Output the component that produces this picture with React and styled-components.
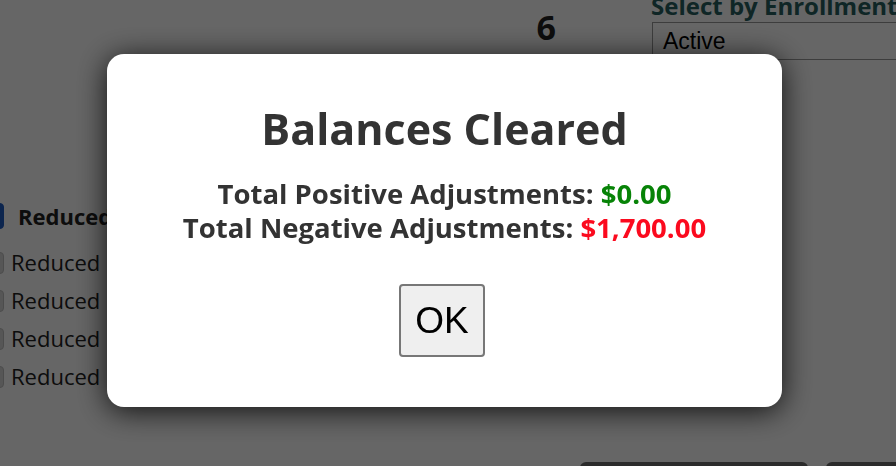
import React from 'react';
import styled, { createGlobalStyle } from 'styled-components';

const Global = createGlobalStyle`
  html, body { margin: 0; padding: 0; }
  body {
    width: 896px;
    height: 466px;
    overflow: hidden;
    background: #fff;
    font-family: "Open Sans", "Noto Sans", sans-serif;
  }
`;

const Page = styled.div`
  width: 896px;
  height: 466px;
  overflow: hidden;
  display: grid;
  grid-template-columns: minmax(0, 1fr);
  grid-template-rows: 62px minmax(0, 1fr) 4px;
`;

const Header = styled.div`
  display: flex;
  justify-content: flex-end;
  align-items: flex-start;
  min-width: 0;
`;

const Count = styled.div`
  font-family: "Open Sans", sans-serif;
  font-weight: 700;
  font-size: 34px;
  line-height: 1;
  color: #222;
  margin: 10px 95px 0 0;
`;

const Filter = styled.div`
  width: 245px;
  flex-shrink: 0;
  display: flex;
  flex-direction: column;
  overflow: hidden;
`;

const FilterLabel = styled.div`
  font-family: "Open Sans", sans-serif;
  font-weight: 700;
  font-size: 24px;
  line-height: 22px;
  color: #266060;
  margin-top: -5px;
  white-space: nowrap;
`;

const Select = styled.div`
  margin: 5px 0 0 1px;
  height: 38px;
  width: 260px;
  box-sizing: border-box;
  border: 1px solid #9a9a9a;
  display: flex;
  align-items: center;
  padding-left: 10px;
  font-family: "Liberation Sans", Arial, sans-serif;
  font-size: 23px;
  color: #000;
`;

const List = styled.div`
  display: flex;
  flex-direction: column;
  padding-top: 141px;
  gap: 15px;
  overflow: hidden;
`;

const Item = styled.label`
  display: flex;
  align-items: center;
  gap: ${(p) => (p.$head ? '14px' : '7px')};
  font-family: "Open Sans", sans-serif;
  font-weight: ${(p) => (p.$head ? 700 : 400)};
  font-size: 22px;
  line-height: 23px;
  color: #222;
  margin-bottom: ${(p) => (p.$head ? '7px' : '0')};
`;

const Box = styled.span`
  display: block;
  flex-shrink: 0;
  width: 20px;
  height: ${(p) => (p.$checked ? '26px' : '22px')};
  margin-left: -16px;
  border-radius: 4px;
  background: ${(p) => (p.$checked ? '#1f5cc4' : '#d8d8d8')};
  border: 1px solid ${(p) => (p.$checked ? '#1f5cc4' : '#bdbdbd')};
  box-sizing: border-box;
`;

const Footer = styled.div`
  display: flex;
  gap: 18px;
  padding-left: 580px;
  overflow: hidden;
`;

const FootButton = styled.div`
  width: ${(p) => p.$w}px;
  height: 30px;
  border-radius: 6px;
  background: #6d6d6d;
  flex-shrink: 0;
`;

const Overlay = styled.div`
  position: fixed;
  inset: 0;
  background: rgba(0, 0, 0, 0.6);
  display: flex;
  align-items: flex-start;
  justify-content: flex-start;
  padding: 54px 0 0 107px;
`;

const Modal = styled.div`
  width: 675px;
  height: 353px;
  box-sizing: border-box;
  background: #fff;
  border-radius: 17px;
  box-shadow: 0 4px 30px rgba(0, 0, 0, 0.85);
  display: flex;
  flex-direction: column;
  align-items: center;
  padding-top: 47px;
  font-family: "Open Sans", "Noto Sans", sans-serif;
  color: #333;
`;

const Title = styled.h2`
  margin: 0;
  font-size: 43px;
  font-weight: 700;
  line-height: 56px;
`;

const Summary = styled.div`
  margin-top: 20px;
  font-size: 27.5px;
  font-weight: 700;
  line-height: 34px;
  text-align: center;
`;

const Amount = styled.span`
  color: ${(p) => (p.$tone === 'pos' ? '#078307' : '#fb0a1e')};
`;

const OkButton = styled.button`
  margin: 39px 5px 0 0;
  width: 86px;
  height: 73px;
  border: 2px solid #777;
  border-radius: 4px;
  background: #efefef;
  font-family: "Liberation Sans", Arial, sans-serif;
  font-size: 37px;
  color: #000;
  padding: 0;
`;

export default function App() {
  const rows = [1, 2, 3, 4];
  return (
    <>
      <Global />
      <Page>
        <Header>
          <Count>6</Count>
          <Filter>
            <FilterLabel>Select by Enrollment</FilterLabel>
            <Select>Active</Select>
          </Filter>
        </Header>
        <List>
          <Item $head>
            <Box $checked />
            Reduced
          </Item>
          {rows.map((r) => (
            <Item key={r}>
              <Box />
              Reduced
            </Item>
          ))}
        </List>
        <Footer>
          <FootButton $w={228} />
          <FootButton $w={90} />
        </Footer>
      </Page>
      <Overlay>
        <Modal>
          <Title>Balances Cleared</Title>
          <Summary>
            Total Positive Adjustments: <Amount $tone="pos">$0.00</Amount>
            <br />
            Total Negative Adjustments: <Amount $tone="neg">$1,700.00</Amount>
          </Summary>
          <OkButton>OK</OkButton>
        </Modal>
      </Overlay>
    </>
  );
}
